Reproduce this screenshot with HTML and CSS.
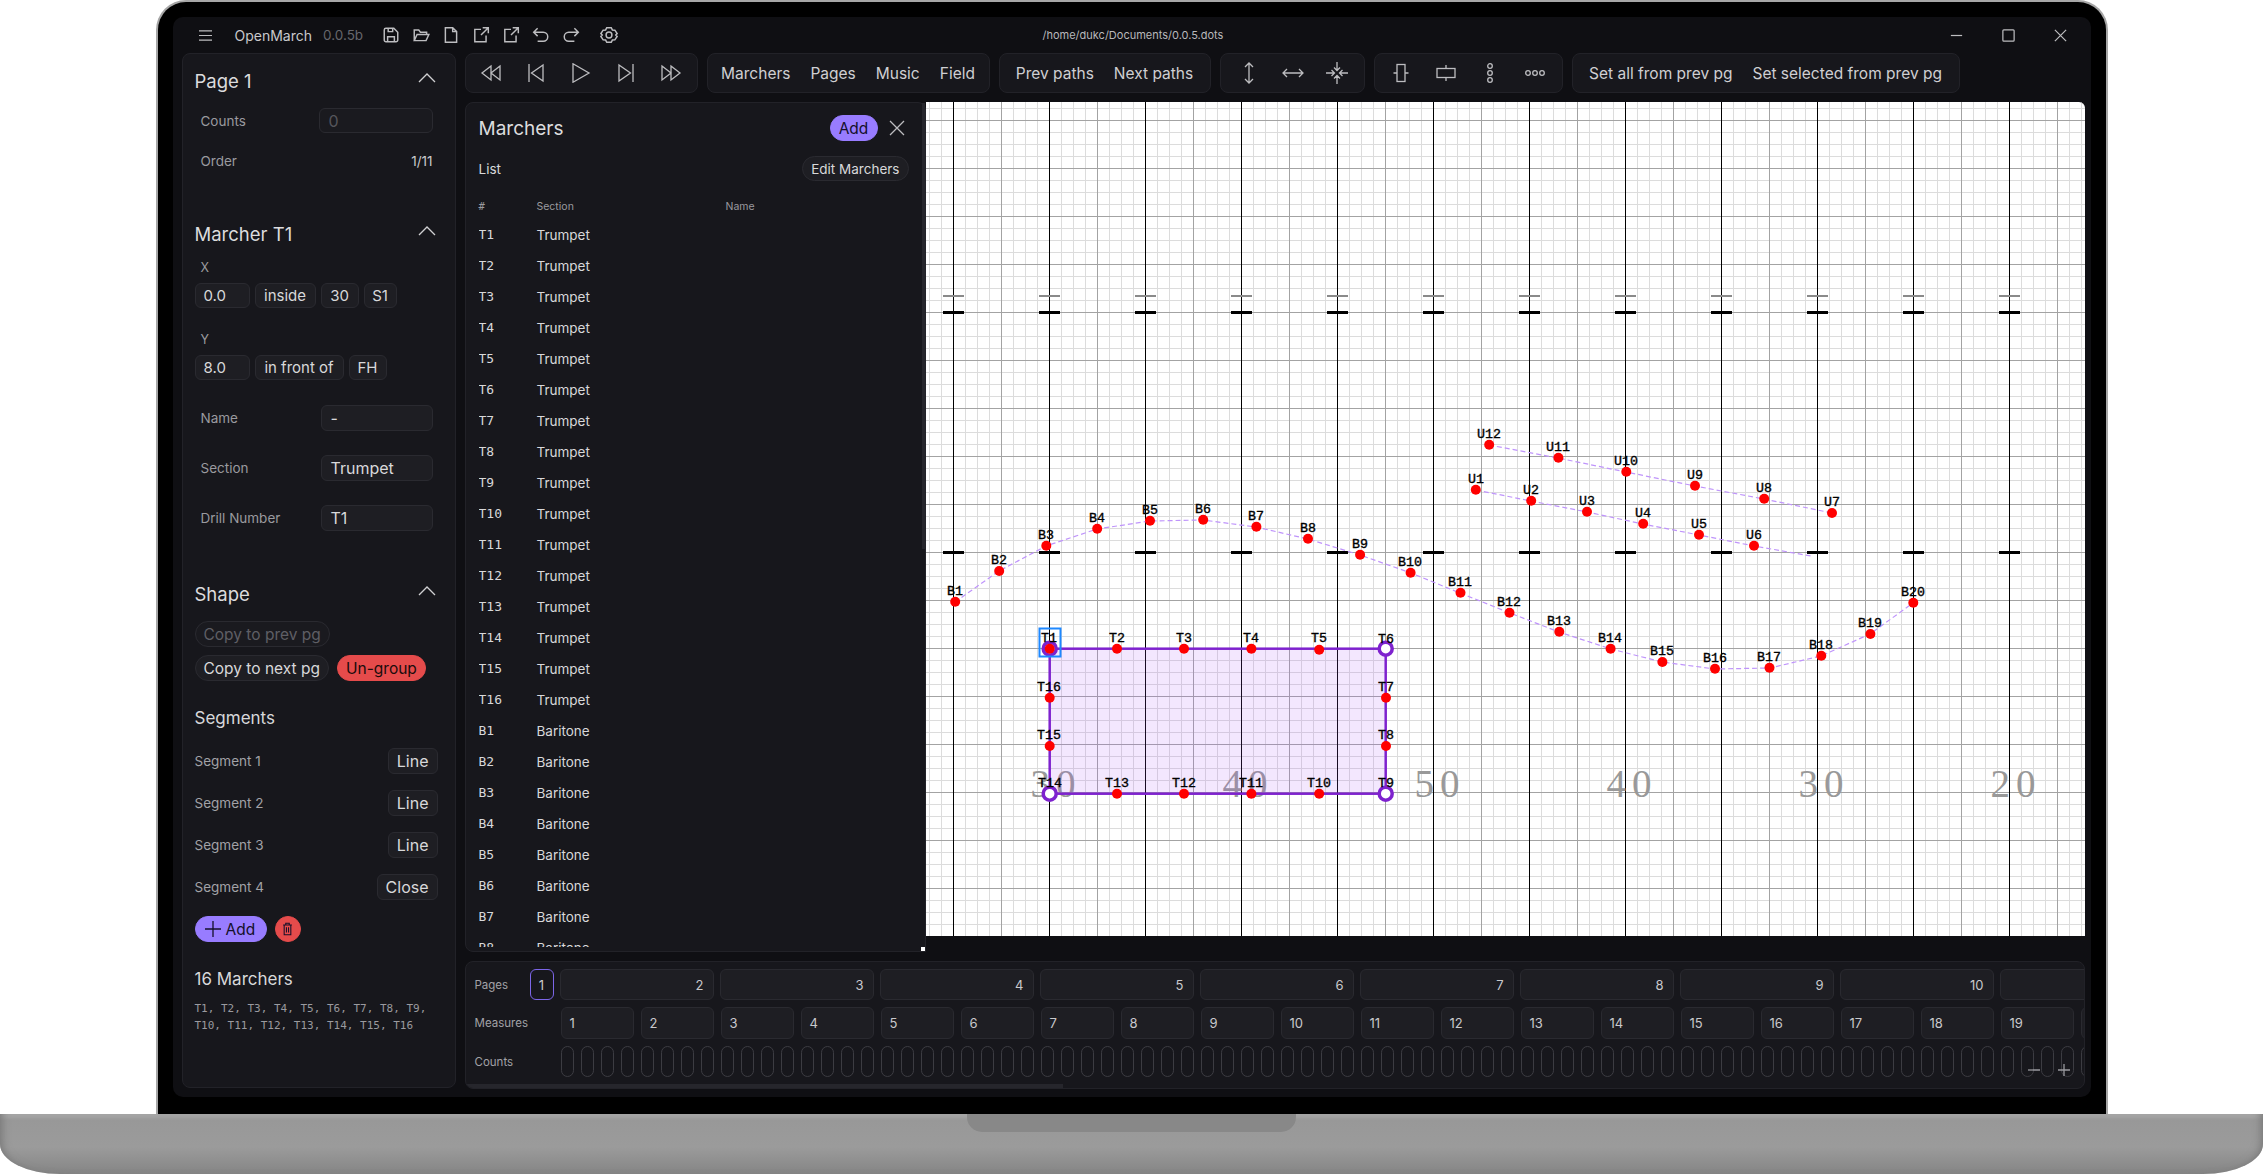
FILE: index.html
```html
<!DOCTYPE html>
<html>
<head>
	<title>OpenMarch</title>
	<link rel="stylesheet" href="styles.css">
</head>
<body>
<div class="lid">
<div class="app">

	<div class="titlebar">
		<svg class="ico menu" viewBox="0 0 16 14"><path d="M1 2h14M1 7h14M1 12h14"/></svg>
		<span class="app-name">OpenMarch</span>
		<span class="app-version">0.0.5b</span>
		<div class="title-icons">
			<svg class="ico" viewBox="0 0 16 16"><path d="M2 3.500A1.500 1.500 0 0 1 3.500 2h7L14 5.500v7a1.500 1.500 0 0 1-1.500 1.500h-9A1.500 1.500 0 0 1 2 12.500zM5 14V9.500h6V14M5.500 2v3h4V2"/></svg>
			<svg class="ico" viewBox="0 0 16 16"><path d="M2 13V3.500h4l1.500 2H13v2M2 13l2.500-5.500H15L12.500 13z"/></svg>
			<svg class="ico" viewBox="0 0 16 16"><path d="M3 1.500h6.500L13 5v9.500H3zM9.500 1.500V5H13"/></svg>
			<svg class="ico" viewBox="0 0 16 16"><path d="M8 3H2.500v11h10V8.500M9.500 1.500h5v5M14.500 1.500L8 8"/></svg>
			<svg class="ico" viewBox="0 0 16 16"><path d="M8 3H2.500v11h10V8.500M9.500 1.500h5v5M14.500 1.500L8 8"/></svg>
			<svg class="ico" viewBox="0 0 16 16"><path d="M5 2L1.500 5.500 5 9M1.500 5.500H10a4 4 0 0 1 0 8H5"/></svg>
			<svg class="ico" viewBox="0 0 16 16"><path d="M11 2l3.500 3.500L11 9M14.500 5.500H6a4 4 0 0 0 0 8h5"/></svg>
			<svg class="ico gear" viewBox="0 0 16 16"><circle cx="8" cy="8" r="2.600"/><path d="M6 1.500h4l1 2 2.200.2 2 3-1.200 1.300 1.200 1.300-2 3-2.200.2-1 2H6l-1-2-2.200-.2-2-3L2 8 .800 6.700l2-3L5 3.500z"/></svg>
		</div>
		<span class="file-path">/home/dukc/Documents/0.0.5.dots</span>
		<div class="window-btns">
			<svg class="ico" viewBox="0 0 16 16"><path d="M2 8h12"/></svg>
			<svg class="ico" viewBox="0 0 16 16"><rect x="2" y="2" width="12" height="12" rx="1"/></svg>
			<svg class="ico" viewBox="0 0 16 16"><path d="M2 2l12 12M14 2L2 14"/></svg>
		</div>
	</div>

	<div class="workspace">

		<div class="inspector">
			<div class="panel-head">
				<h2>Page 1</h2>
				<svg class="caret" viewBox="0 0 18 10"><path d="M1 9l8-8 8 8"/></svg>
			</div>
			<div class="field first-field">
				<label>Counts</label>
				<div class="input input-wide dim">0</div>
			</div>
			<div class="field order-field">
				<label>Order</label>
				<span class="order-value">1/11</span>
			</div>

			<div class="panel-head marcher-head">
				<h2>Marcher T1</h2>
				<svg class="caret" viewBox="0 0 18 10"><path d="M1 9l8-8 8 8"/></svg>
			</div>
			<div class="coord-label x-label">X</div>
			<div class="coord-row">
				<span class="box box-num">0.0</span>
				<span class="box box-inside">inside</span>
				<span class="box box-yard">30</span>
				<span class="box box-side">S1</span>
			</div>
			<div class="coord-label y-label">Y</div>
			<div class="coord-row">
				<span class="box box-num">8.0</span>
				<span class="box box-front">in front of</span>
				<span class="box box-yard">FH</span>
			</div>
			<div class="field name-field">
				<label>Name</label>
				<div class="input">-</div>
			</div>
			<div class="field">
				<label>Section</label>
				<div class="input">Trumpet</div>
			</div>
			<div class="field">
				<label>Drill Number</label>
				<div class="input">T1</div>
			</div>

			<div class="panel-head shape-head">
				<h2>Shape</h2>
				<svg class="caret" viewBox="0 0 18 10"><path d="M1 9l8-8 8 8"/></svg>
			</div>
			<div class="shape-actions">
				<span class="pill pill-disabled">Copy to prev pg</span>
			</div>
			<div class="shape-actions second-action">
				<span class="pill">Copy to next pg</span>
				<span class="pill pill-red">Un-group</span>
			</div>

			<h3 class="segments-title">Segments</h3>
			<div class="segment first-segment"><span>Segment 1</span><span class="box">Line</span></div>
			<div class="segment"><span>Segment 2</span><span class="box">Line</span></div>
			<div class="segment"><span>Segment 3</span><span class="box">Line</span></div>
			<div class="segment"><span>Segment 4</span><span class="box">Close</span></div>
			<div class="segment-actions">
				<span class="pill pill-violet pill-add">
					<svg viewBox="0 0 16 16"><path d="M8 0v16M0 8h16"/></svg>Add
				</span>
				<span class="pill pill-red pill-trash">
					<svg viewBox="0 0 12 16"><path d="M1 3.500h10M4 3.500V1.500h4v2M2.200 3.500v11h7.600v-11M4.800 6v6M7.200 6v6"/></svg>
				</span>
			</div>

			<h3 class="selected-title">16 Marchers</h3>
			<p class="selected-list">T1, T2, T3, T4, T5, T6, T7, T8, T9,<br>T10, T11, T12, T13, T14, T15, T16</p>
		</div>

		<div class="stage">
			<div class="toolbar">
				<div class="tool-group group-transport">
					<svg class="ico tool" viewBox="0 0 22 20"><path d="M11 3L2 10l9 7zM20 3l-9 7 9 7z"/></svg>
					<svg class="ico tool" viewBox="0 0 22 20"><path d="M4 1v18M18 2L6.500 10 18 18z"/></svg>
					<svg class="ico tool" viewBox="0 0 22 20"><path d="M3 .8L19 10 3 19.200z"/></svg>
					<svg class="ico tool" viewBox="0 0 22 20"><path d="M18 1v18M4 2l11.500 8L4 18z"/></svg>
					<svg class="ico tool" viewBox="0 0 22 20"><path d="M2 3l9 7-9 7zM11 3l9 7-9 7z"/></svg>
				</div>
				<div class="tool-group group-views">
					<span>Marchers</span><span>Pages</span><span>Music</span><span>Field</span>
				</div>
				<div class="tool-group group-paths">
					<span>Prev paths</span><span>Next paths</span>
				</div>
				<div class="tool-group group-spread">
					<svg class="ico tool" viewBox="0 0 22 22"><path d="M11 1v20M7 5l4-4 4 4M7 17l4 4 4-4"/></svg>
					<svg class="ico tool" viewBox="0 0 22 22"><path d="M1 11h20M5 7l-4 4 4 4M17 7l4 4-4 4"/></svg>
					<svg class="ico tool" viewBox="0 0 22 22"><path d="M11 0v8M8 5.500L11 8.500l3-3M11 22v-8M8 16.500l3-3 3 3M0 11h8M5.500 8l3 3-3 3M22 11h-8M16.500 8l-3 3 3 3"/></svg>
				</div>
				<div class="tool-group group-align">
					<svg class="ico tool" viewBox="0 0 22 22"><rect x="7" y="2.500" width="8" height="17"/><path d="M3.500 11H7M15 11h3.500"/></svg>
					<svg class="ico tool" viewBox="0 0 22 22"><rect x="2" y="6.500" width="18" height="9"/><path d="M11 3v3.500M11 15.500V19"/></svg>
					<svg class="ico tool" viewBox="0 0 22 22"><circle cx="11" cy="4" r="2.300"/><circle cx="11" cy="11" r="2.300"/><circle cx="11" cy="18" r="2.300"/></svg>
					<svg class="ico tool" viewBox="0 0 22 22"><circle cx="4" cy="11" r="2.300"/><circle cx="11" cy="11" r="2.300"/><circle cx="18" cy="11" r="2.300"/></svg>
				</div>
				<div class="tool-group group-set">
					<span>Set all from prev pg</span><span>Set selected from prev pg</span>
				</div>
			</div>

			<div class="main">
				<div class="marchers">
					<div class="marchers-head">
						<h2>Marchers</h2>
						<span class="pill pill-violet">Add</span>
						<svg class="ico close" viewBox="0 0 16 16"><path d="M1 1l14 14M15 1L1 15"/></svg>
					</div>
					<div class="marchers-sub">
						<span>List</span>
						<span class="pill">Edit Marchers</span>
					</div>
					<div class="row row-head"><span class="cell-num">#</span><span class="cell-section">Section</span><span>Name</span></div>
					<div class="rows">
						<div class="row"><span class="cell-num">T1</span><span>Trumpet</span></div>
						<div class="row"><span class="cell-num">T2</span><span>Trumpet</span></div>
						<div class="row"><span class="cell-num">T3</span><span>Trumpet</span></div>
						<div class="row"><span class="cell-num">T4</span><span>Trumpet</span></div>
						<div class="row"><span class="cell-num">T5</span><span>Trumpet</span></div>
						<div class="row"><span class="cell-num">T6</span><span>Trumpet</span></div>
						<div class="row"><span class="cell-num">T7</span><span>Trumpet</span></div>
						<div class="row"><span class="cell-num">T8</span><span>Trumpet</span></div>
						<div class="row"><span class="cell-num">T9</span><span>Trumpet</span></div>
						<div class="row"><span class="cell-num">T10</span><span>Trumpet</span></div>
						<div class="row"><span class="cell-num">T11</span><span>Trumpet</span></div>
						<div class="row"><span class="cell-num">T12</span><span>Trumpet</span></div>
						<div class="row"><span class="cell-num">T13</span><span>Trumpet</span></div>
						<div class="row"><span class="cell-num">T14</span><span>Trumpet</span></div>
						<div class="row"><span class="cell-num">T15</span><span>Trumpet</span></div>
						<div class="row"><span class="cell-num">T16</span><span>Trumpet</span></div>
						<div class="row"><span class="cell-num">B1</span><span>Baritone</span></div>
						<div class="row"><span class="cell-num">B2</span><span>Baritone</span></div>
						<div class="row"><span class="cell-num">B3</span><span>Baritone</span></div>
						<div class="row"><span class="cell-num">B4</span><span>Baritone</span></div>
						<div class="row"><span class="cell-num">B5</span><span>Baritone</span></div>
						<div class="row"><span class="cell-num">B6</span><span>Baritone</span></div>
						<div class="row"><span class="cell-num">B7</span><span>Baritone</span></div>
						<div class="row"><span class="cell-num">B8</span><span>Baritone</span></div>
					</div>
					<div class="scroll-thumb"></div>
					<div class="resize-handle"></div>
				</div>

				<svg class="field-canvas" viewBox="926 102 1159 834">
					<defs>
						<pattern id="fine" patternUnits="userSpaceOnUse" x="953" y="120" width="12" height="12">
							<path d="M.5 0v12M0 .5h12" class="line-fine"/>
						</pattern>
						<pattern id="mid" patternUnits="userSpaceOnUse" x="953" y="120" width="48" height="48">
							<path d="M.5 0v48M0 .5h48" class="line-mid"/>
						</pattern>
						<pattern id="major" patternUnits="userSpaceOnUse" x="953" y="120" width="96" height="48">
							<path d="M.5 0v48" class="line-major"/>
						</pattern>
					</defs>
					<rect x="926" y="102" width="1159" height="834" fill="#fff"/>
					<rect x="926" y="102" width="1159" height="834" fill="url(#fine)"/>
					<rect x="926" y="102" width="1159" height="834" fill="url(#mid)"/>
					<rect x="926" y="102" width="1159" height="834" fill="url(#major)"/>
					<line class="hash-grey" x1="943" x2="2085" y1="296" y2="296"/>
					<line class="hash" x1="943" x2="2085" y1="312.500" y2="312.500"/>
					<line class="hash" x1="943" x2="2085" y1="552.500" y2="552.500"/>

					<g class="yard">
						<text x="1056" y="797">30</text>
						<text x="1248" y="797">40</text>
						<text x="1440" y="797">50</text>
						<text x="1632" y="797">40</text>
						<text x="1824" y="797">30</text>
						<text x="2016" y="797">20</text>
					</g>

					<rect class="shape" x="1049.700" y="648.700" width="336" height="145"/>
					<polyline class="path" points="955,602 999,571 1046,546 1097,529 1150,521 1203,520 1256,527 1308,539 1360,555 1411,573 1460,593 1510,613 1559,632 1611,649 1662,662 1715,669 1770,668 1821,656 1870,634 1913,603"/>
					<polyline class="path" points="1489,445 1558,458 1626,472 1695,486 1764,499 1832,513"/>
					<polyline class="path" points="1476,490 1531,501 1587,512 1643,524 1699,535 1754,546 1811,556"/>

					<circle class="handle" cx="1049.700" cy="648.700" r="6.500"/>
					<circle class="handle" cx="1385.700" cy="648.700" r="6.500"/>
					<circle class="handle" cx="1385.700" cy="793.700" r="6.500"/>
					<circle class="handle" cx="1049.700" cy="793.700" r="6.500"/>
					<rect class="selected" x="1039.500" y="628.500" width="21" height="28"/>

					<g class="dots">
						<circle cx="955.200" cy="601.700" r="5"/><circle cx="999.200" cy="571" r="5"/><circle cx="1046.300" cy="545.700" r="5"/><circle cx="1097.200" cy="528.700" r="5"/><circle cx="1150" cy="520.700" r="5"/><circle cx="1203.200" cy="519.700" r="5"/><circle cx="1256.400" cy="526.700" r="5"/><circle cx="1308" cy="538.700" r="5"/><circle cx="1360.100" cy="554.700" r="5"/><circle cx="1410.600" cy="572.700" r="5"/>
						<circle cx="1460.500" cy="592.700" r="5"/><circle cx="1509.500" cy="612.700" r="5"/><circle cx="1559.300" cy="631.700" r="5"/><circle cx="1610.600" cy="648.700" r="5"/><circle cx="1662.400" cy="662" r="5"/><circle cx="1715" cy="668.700" r="5"/><circle cx="1769.500" cy="667.700" r="5"/><circle cx="1821.300" cy="655.700" r="5"/><circle cx="1870.400" cy="634" r="5"/><circle cx="1913.300" cy="602.700" r="5"/>
						<circle cx="1489.200" cy="444.700" r="5"/><circle cx="1558.400" cy="457.700" r="5"/><circle cx="1626.300" cy="471.700" r="5"/><circle cx="1695" cy="485.700" r="5"/><circle cx="1764.200" cy="498.700" r="5"/><circle cx="1832" cy="513" r="5"/>
						<circle cx="1475.800" cy="489.700" r="5"/><circle cx="1531.200" cy="500.700" r="5"/><circle cx="1587" cy="511.700" r="5"/><circle cx="1643.200" cy="523.700" r="5"/><circle cx="1699" cy="534.700" r="5"/><circle cx="1754" cy="545.700" r="5"/>
						<circle cx="1049.700" cy="648.700" r="5"/><circle cx="1117" cy="648.700" r="5"/><circle cx="1184" cy="648.700" r="5"/><circle cx="1251.400" cy="648.700" r="5"/><circle cx="1319.200" cy="649.700" r="5"/>
						<circle cx="1386" cy="697.700" r="5"/><circle cx="1386" cy="746" r="5"/><circle cx="1319.200" cy="793.700" r="5"/><circle cx="1251.400" cy="793.700" r="5"/><circle cx="1184" cy="793.700" r="5"/><circle cx="1117" cy="793.700" r="5"/><circle cx="1049.700" cy="746" r="5"/><circle cx="1049.700" cy="697.700" r="5"/>
					</g>

					<g class="labels">
						<text x="955" y="595">B1</text><text x="999" y="564">B2</text><text x="1046" y="539">B3</text><text x="1097" y="522">B4</text><text x="1150" y="514">B5</text><text x="1203" y="513">B6</text><text x="1256" y="520">B7</text><text x="1308" y="532">B8</text><text x="1360" y="548">B9</text><text x="1410" y="566">B10</text>
						<text x="1460" y="586">B11</text><text x="1509" y="606">B12</text><text x="1559" y="625">B13</text><text x="1610" y="642">B14</text><text x="1662" y="655">B15</text><text x="1715" y="662">B16</text><text x="1769" y="661">B17</text><text x="1821" y="649">B18</text><text x="1870" y="627">B19</text><text x="1913" y="596">B20</text>
						<text x="1489" y="438">U12</text><text x="1558" y="451">U11</text><text x="1626" y="465">U10</text><text x="1695" y="479">U9</text><text x="1764" y="492">U8</text><text x="1832" y="506">U7</text>
						<text x="1476" y="483">U1</text><text x="1531" y="494">U2</text><text x="1587" y="505">U3</text><text x="1643" y="517">U4</text><text x="1699" y="528">U5</text><text x="1754" y="539">U6</text>
						<text x="1049" y="642">T1</text><text x="1117" y="642">T2</text><text x="1184" y="642">T3</text><text x="1251" y="642">T4</text><text x="1319" y="642">T5</text><text x="1386" y="643">T6</text><text x="1386" y="691">T7</text><text x="1386" y="739">T8</text><text x="1386" y="787">T9</text>
						<text x="1319" y="787">T10</text><text x="1251" y="787">T11</text><text x="1184" y="787">T12</text><text x="1117" y="787">T13</text><text x="1050" y="787">T14</text><text x="1049" y="739">T15</text><text x="1049" y="691">T16</text>
					</g>
				</svg>
			</div>

			<div class="timeline">
				<div class="tl-row tl-pages">
					<span class="tl-label tl-label-short">Pages</span>
					<span class="tl-box tl-current">1</span>
					<span class="tl-box tl-page">2</span>
					<span class="tl-box tl-page">3</span>
					<span class="tl-box tl-page">4</span>
					<span class="tl-box tl-page">5</span>
					<span class="tl-box tl-page">6</span>
					<span class="tl-box tl-page">7</span>
					<span class="tl-box tl-page">8</span>
					<span class="tl-box tl-page">9</span>
					<span class="tl-box tl-page">10</span>
					<span class="tl-box tl-page"></span>
				</div>
				<div class="tl-row tl-measures">
					<span class="tl-label">Measures</span>
					<span class="tl-box">1</span><span class="tl-box">2</span><span class="tl-box">3</span><span class="tl-box">4</span><span class="tl-box">5</span>
					<span class="tl-box">6</span><span class="tl-box">7</span><span class="tl-box">8</span><span class="tl-box">9</span><span class="tl-box">10</span>
					<span class="tl-box">11</span><span class="tl-box">12</span><span class="tl-box">13</span><span class="tl-box">14</span><span class="tl-box">15</span>
					<span class="tl-box">16</span><span class="tl-box">17</span><span class="tl-box">18</span><span class="tl-box">19</span><span class="tl-box"></span>
				</div>
				<div class="tl-row tl-counts">
					<span class="tl-label">Counts</span>
					<i></i><i></i><i></i><i></i><i></i><i></i><i></i><i></i><i></i><i></i>
					<i></i><i></i><i></i><i></i><i></i><i></i><i></i><i></i><i></i><i></i>
					<i></i><i></i><i></i><i></i><i></i><i></i><i></i><i></i><i></i><i></i>
					<i></i><i></i><i></i><i></i><i></i><i></i><i></i><i></i><i></i><i></i>
					<i></i><i></i><i></i><i></i><i></i><i></i><i></i><i></i><i></i><i></i>
					<i></i><i></i><i></i><i></i><i></i><i></i><i></i><i></i><i></i><i></i>
					<i></i><i></i><i></i><i></i><i></i><i></i><i></i><i></i><i></i><i></i>
					<i></i><i></i><i></i><i></i><i></i><i></i><i></i>
				</div>
				<div class="tl-zoom">
					<svg viewBox="0 0 12 12"><path d="M0 6h12"/></svg>
					<svg viewBox="0 0 12 12"><path d="M0 6h12M6 0v12"/></svg>
				</div>
				<div class="tl-scroll"></div>
			</div>
		</div>
	</div>
</div>
</div>
<div class="base"><div class="notch"></div></div>
</body>
</html>
```

FILE: styles.css
```css
* {
	box-sizing: border-box;
}
html, body {
	margin: 0;
	background: #fff;
}
body {
	width: 2263px;
	height: 1174px;
	overflow: hidden;
	font-family: Inter, "Liberation Sans", sans-serif;
	font-size: 13.500px;
	color: #d8d8da;
}
h2, h3, p {
	margin: 0;
	font-weight: 400;
}
svg {
	display: block;
}

/* laptop */
.lid {
	width: 1952px;
	height: 1114px;
	margin: 0 auto;
	padding: 15px 15px 15px 15px;
	background: #000;
	border: 2px solid #a6a6a6;
	border-bottom: 0;
	border-radius: 30px 30px 0 0;
}
.base {
	height: 60px;
	display: flex;
	justify-content: center;
	border-radius: 0 0 60px 60px / 0 0 30px 30px;
	background: linear-gradient(#b0b0b0, #989898 10%, #9b9b9b 55%, #858585);
	box-shadow: inset 7px 0 8px -5px #777, inset -7px 0 8px -5px #777;
}
.notch {
	width: 329px;
	height: 18px;
	border-radius: 0 0 15px 15px;
	background: #888;
}

/* window */
.app {
	height: 1080px;
	display: flex;
	flex-direction: column;
	padding: 0 6px 9px 9px;
	border-radius: 10px;
	background: #0f0f13;
}
.ico {
	fill: none;
	stroke: #bdbdc0;
	stroke-width: 1.300;
	flex: none;
}
.titlebar {
	height: 36px;
	flex: none;
	display: flex;
	align-items: center;
	padding-left: 16px;
	position: relative;
	color: #c9c9cc;
}
.menu {
	width: 15px;
	height: 13px;
}
.app-name {
	margin-left: 22px;
	font-size: 14px;
}
.app-version {
	margin-left: 11px;
	font-size: 13.500px;
	color: #66666c;
}
.title-icons {
	display: flex;
	gap: 12px;
	margin-left: 19px;
}
.title-icons .ico {
	width: 18px;
	height: 18px;
}
.title-icons .gear {
	margin-left: 8px;
}
.file-path {
	position: absolute;
	left: 861px;
	font-size: 11px;
	color: #b8b8bb;
}
.window-btns {
	display: flex;
	gap: 37px;
	margin-left: auto;
	padding-right: 17px;
}
.window-btns .ico {
	width: 15px;
	height: 15px;
}

.workspace {
	flex: 1;
	display: flex;
	gap: 9px;
	min-height: 0;
}

/* left side */
.inspector {
	width: 274px;
	flex: none;
	padding: 15px 17px 0 12px;
	background: #17171c;
	border: 1px solid #222228;
	border-radius: 8px;
}
.panel-head {
	height: 24px;
	display: flex;
	justify-content: space-between;
	align-items: center;
}
.panel-head h2 {
	font-size: 18.500px;
	color: #dcdcde;
}
.caret {
	width: 18px;
	height: 10px;
	margin: -7px 2px 0 0;
	fill: none;
	stroke: #d0d0d2;
	stroke-width: 1.300;
}
.field {
	display: flex;
	justify-content: space-between;
	align-items: center;
	height: 26px;
	margin-top: 24px;
	padding: 0 5px 0 6px;
}
.field label {
	color: #9a9a9f;
}
.first-field {
	margin-top: 15px;
	height: 25px;
}
.order-field {
	margin-top: 15px;
	height: 25px;
}
.order-value {
	color: #c9c9cc;
}
.name-field {
	margin-top: 25px;
}
.input {
	width: 112px;
	height: 100%;
	display: flex;
	align-items: center;
	padding: 0 9px;
	font-size: 16px;
	background: #1e1e23;
	border: 1px solid #2a2a30;
	border-radius: 6px;
}
.input-wide {
	width: 114px;
}
.dim {
	color: #55555b;
	background: #1a1a1f;
}
.marcher-head {
	margin-top: 49px;
}
.coord-label {
	height: 16px;
	line-height: 16px;
	padding-left: 6px;
	font-size: 12.500px;
	color: #9a9a9f;
}
.x-label {
	margin-top: 14px;
}
.y-label {
	margin-top: 24px;
}
.coord-row {
	display: flex;
	gap: 5px;
	margin-top: 7px;
}
.box {
	height: 25px;
	display: inline-flex;
	align-items: center;
	padding: 0 8px;
	font-size: 15px;
	background: #1e1e23;
	border: 1px solid #2a2a30;
	border-radius: 6px;
}
.box-num {
	width: 55px;
}
.box-inside,
.box-yard,
.box-side,
.box-front {
	padding: 0;
	justify-content: center;
}
.box-inside {
	width: 61px;
}
.box-yard {
	width: 38px;
}
.box-side {
	width: 33px;
}
.box-front {
	width: 89px;
}
.shape-head {
	margin-top: 51px;
}
.shape-actions {
	display: flex;
	gap: 8px;
	margin-top: 15px;
}
.second-action {
	margin-top: 8px;
}
.pill {
	height: 26px;
	display: inline-flex;
	align-items: center;
	padding: 0 8px;
	font-size: 15.500px;
	color: #d8d8da;
	background: #1e1e23;
	border: 1px solid #2a2a30;
	border-radius: 13px;
}
.pill-disabled {
	color: #5f5f65;
	background: #1a1a1f;
}
.pill-red {
	color: #1a0c0c;
	background: #e54b4b;
	border-color: #e54b4b;
}
.pill-violet {
	color: #14102a;
	background: #987cff;
	border-color: #987cff;
}
.segments-title {
	margin-top: 27px;
	height: 20px;
	line-height: 20px;
	font-size: 17px;
}
.segment {
	display: flex;
	justify-content: space-between;
	align-items: center;
	margin-top: 16px;
	color: #a2a2a7;
}
.segment .box {
	height: 26px;
	font-size: 16px;
	color: #d8d8da;
}
.first-segment {
	margin-top: 20px;
}
.segment-actions {
	display: flex;
	gap: 8px;
	margin-top: 16px;
}
.pill-add {
	width: 72px;
	gap: 5px;
	padding: 0 9px;
}
.pill-add svg {
	width: 16px;
	height: 16px;
	flex: none;
	fill: none;
	stroke: #14102a;
	stroke-width: 1.300;
}
.pill-trash {
	width: 26px;
	padding: 0;
	justify-content: center;
}
.pill-trash svg {
	width: 11px;
	height: 14px;
	fill: none;
	stroke: #14102a;
	stroke-width: 1.200;
}
.selected-title {
	margin-top: 26px;
	height: 22px;
	line-height: 22px;
	font-size: 17px;
}
.selected-list {
	margin-top: 10px;
	font-family: "DejaVu Sans Mono", "Liberation Mono", monospace;
	font-size: 11px;
	line-height: 17px;
	color: #9a9a9f;
}

/* right side */
.stage {
	flex: 1;
	min-width: 0;
	display: flex;
	flex-direction: column;
}
.toolbar {
	height: 40px;
	flex: none;
	display: flex;
	gap: 9px;
}
.tool-group {
	display: flex;
	align-items: center;
	justify-content: center;
	font-size: 15.500px;
	color: #cfcfd2;
	background: #17171c;
	border: 1px solid #222228;
	border-radius: 8px;
}
.group-transport {
	width: 233px;
	gap: 23px;
}
.group-views {
	width: 283px;
	gap: 20px;
}
.group-paths {
	width: 212px;
	gap: 20px;
}
.group-spread {
	width: 145px;
	gap: 22px;
	padding-left: 2px;
}
.group-align {
	width: 189px;
	gap: 22.500px;
}
.group-set {
	width: 388px;
	gap: 20px;
}
.tool {
	width: 22px;
	height: 20px;
}
.group-spread .tool,
.group-align .tool {
	height: 22px;
}

.main {
	flex: none;
	height: 859px;
	margin-top: 9px;
	display: flex;
	align-items: flex-start;
}
.marchers {
	width: 461px;
	height: 850px;
	flex: none;
	display: flex;
	flex-direction: column;
	padding: 12px 0 4px 13px;
	position: relative;
	background: #17171c;
	border: 1px solid #222228;
	border-radius: 8px 8px 0 8px;
}
.marchers-head {
	display: flex;
	align-items: center;
	height: 26px;
}
.marchers-head h2 {
	flex: 1;
	font-size: 19px;
	color: #dcdcde;
}
.marchers-head .pill {
	width: 48px;
	justify-content: center;
	padding: 0;
}
.close {
	width: 16px;
	height: 16px;
	margin: 0 20px 0 11px;
}
.marchers-sub {
	display: flex;
	justify-content: space-between;
	align-items: center;
	margin-top: 15px;
	padding-right: 16px;
}
.marchers-sub .pill {
	height: 25px;
	font-size: 13.500px;
}
.row {
	height: 31px;
	display: flex;
	align-items: center;
}
.row-head {
	height: 20px;
	margin-top: 15px;
	font-size: 10.500px;
	color: #9a9a9f;
}
.cell-num {
	width: 58px;
	font-family: "DejaVu Sans Mono", monospace;
	font-size: 13px;
}
.row-head .cell-num {
	font-size: 10.500px;
}
.cell-section {
	width: 189px;
}
.rows {
	flex: 1;
	margin-top: 3px;
	overflow: hidden;
}
.scroll-thumb {
	position: absolute;
	top: 0;
	right: 0;
	width: 3px;
	height: 446px;
	background: #26262c;
}
.resize-handle {
	position: absolute;
	right: 0;
	bottom: 0;
	width: 4px;
	height: 4px;
	background: #fff;
}

.field-canvas {
	width: 1159px;
	height: 834px;
	flex: none;
	border-radius: 0 6px 0 0;
}
.line-fine {
	stroke: #dcdcdc;
	stroke-width: 1;
	fill: none;
}
.line-mid {
	stroke: #a3a3a3;
	stroke-width: 1;
	fill: none;
}
.line-major {
	stroke: #000;
	stroke-width: 1;
	fill: none;
}
.hash {
	stroke: #000;
	stroke-width: 3;
	stroke-dasharray: 21 75;
}
.hash-grey {
	stroke: #8a8a8a;
	stroke-width: 2;
	stroke-dasharray: 21 75;
}
.yard text {
	font-family: "Liberation Serif", serif;
	font-size: 39px;
	letter-spacing: 6px;
	text-anchor: middle;
	fill: #999;
}
.shape {
	fill: rgba(168, 85, 247, 0.14);
	stroke: #7e22ce;
	stroke-width: 2.500;
}
.path {
	fill: none;
	stroke: #bf94fb;
	stroke-width: 1.200;
	stroke-dasharray: 5 3;
}
.handle {
	fill: #fff;
	stroke: #7e22ce;
	stroke-width: 3.500;
}
.selected {
	fill: none;
	stroke: #1e88ff;
	stroke-width: 2;
}
.dots circle {
	fill: #f00;
}
.labels text {
	font-family: "Liberation Mono", monospace;
	font-size: 13.300px;
	text-anchor: middle;
	fill: #000;
	stroke: #000;
	stroke-width: 0.350;
}

.timeline {
	flex: 1;
	margin-bottom: -1px;
	padding: 7px 0 0 9px;
	position: relative;
	overflow: hidden;
	display: flex;
	flex-direction: column;
	gap: 6px;
	background: #17171c;
	border: 1px solid #222228;
	border-radius: 8px;
}
.tl-row {
	display: flex;
	align-items: center;
	flex: none;
	font-size: 14px;
}
.tl-label {
	width: 86px;
	flex: none;
	font-size: 11.500px;
	color: #a2a2a7;
}
.tl-label-short {
	width: 55px;
}
.tl-pages {
	gap: 6.500px;
	height: 31px;
}
.tl-pages .tl-label {
	margin-right: -6.500px;
}
.tl-box {
	height: 100%;
	flex: none;
	display: flex;
	align-items: center;
	font-size: 13px;
	color: #c9c9cc;
	background: #1e1e23;
	border: 1px solid #2a2a30;
	border-radius: 6px;
}
.tl-current {
	width: 24px;
	justify-content: center;
	border-color: #7c66e8;
	background: #17171c;
}
.tl-page {
	width: 153.500px;
	justify-content: flex-end;
	padding-right: 9px;
}
.tl-measures {
	height: 32px;
	margin-top: 1px;
	gap: 7px;
}
.tl-measures .tl-label {
	margin-right: -7px;
}
.tl-measures .tl-box {
	width: 73px;
	padding-left: 8px;
}
.tl-counts {
	height: 31px;
	margin-top: 1px;
	gap: 6.500px;
}
.tl-counts .tl-label {
	margin-right: -6.500px;
}
.tl-counts i {
	width: 13.500px;
	height: 100%;
	flex: none;
	border: 1px solid #3c3c42;
	border-radius: 7px;
}
.tl-zoom {
	position: absolute;
	right: 14px;
	bottom: 12px;
	display: flex;
	gap: 18px;
}
.tl-zoom svg {
	width: 12px;
	height: 12px;
	fill: none;
	stroke: #9a9a9f;
	stroke-width: 1.300;
}
.tl-scroll {
	position: absolute;
	left: 0;
	bottom: 0;
	width: 597px;
	height: 4px;
	background: #26262c;
}
```
